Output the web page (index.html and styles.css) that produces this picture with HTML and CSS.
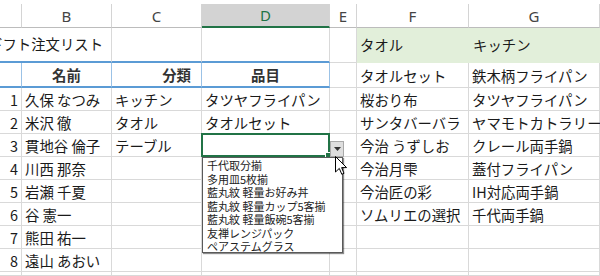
FILE: index.html
```html
<!DOCTYPE html>
<html lang="ja">

<head>
    <meta charset="utf-8">
    <title>ギフト注文リスト</title>
    <link rel="stylesheet" href="styles.css">
</head>

<body>
    <div class="sheet">
        <!--kolonne overskrifter-->
        <div class="hd"></div>
        <div class="hd">B</div>
        <div class="hd">C</div>
        <div class="hd on">D</div>
        <div class="hd">E</div>
        <div class="hd">F</div>
        <div class="hd">G</div>

        <!--titel række-->
        <div class="c ttl first"><span class="titel">ギフト注文リスト</span></div>
        <div class="c ttl"></div>
        <div class="c ttl"></div>
        <div class="c ttl"></div>
        <div class="c"></div>
        <div class="c grn f">タオル</div>
        <div class="c grn">キッチン</div>

        <!--tabel overskrift-->
        <div class="c th"></div>
        <div class="c th ctr">名前</div>
        <div class="c th rt">分類</div>
        <div class="c th ctr">品目</div>
        <div class="c"></div>
        <div class="c">タオルセット</div>
        <div class="c">鉄木柄フライパン</div>

        <div class="c num">1</div>
        <div class="c">久保 なつみ</div>
        <div class="c">キッチン</div>
        <div class="c">タツヤフライパン</div>
        <div class="c"></div>
        <div class="c">桜おり布</div>
        <div class="c">タツヤフライパン</div>

        <div class="c num">2</div>
        <div class="c">米沢 徹</div>
        <div class="c">タオル</div>
        <div class="c">タオルセット</div>
        <div class="c"></div>
        <div class="c">サンタバーバラ</div>
        <div class="c">ヤマモトカトラリー</div>

        <div class="c num">3</div>
        <div class="c">貫地谷 倫子</div>
        <div class="c">テーブル</div>
        <!--aktiv celle med dropdown liste-->
        <div class="c act">
            <div class="sel"><i class="handle"></i></div>
            <div class="btn">
                <svg width="7" height="5" viewBox="0 0 7 5"><path d="M0 0 L7 0 L3.5 4 Z" fill="#333"/></svg>
            </div>
            <ul class="list">
                <li>千代取分揃</li>
                <li>多用皿5枚揃</li>
                <li>藍丸紋 軽量お好み丼</li>
                <li>藍丸紋 軽量カップ5客揃</li>
                <li>藍丸紋 軽量飯碗5客揃</li>
                <li>友禅レンジパック</li>
                <li>ペアステムグラス</li>
            </ul>
            <svg class="cur" width="13" height="20" viewBox="0 0 13 20">
                <path d="M0.5 0.5 L0.5 16 L4.3 12.4 L6.8 18.3 L9 17.3 L6.6 11.6 L11.6 11.6 Z" fill="#fff" stroke="#000" stroke-width="1"/>
            </svg>
        </div>
        <div class="c"></div>
        <div class="c">今治 うずしお</div>
        <div class="c">クレール両手鍋</div>

        <div class="c num">4</div>
        <div class="c">川西 那奈</div>
        <div class="c"></div>
        <div class="c"></div>
        <div class="c"></div>
        <div class="c">今治月雫</div>
        <div class="c">蓋付フライパン</div>

        <div class="c num">5</div>
        <div class="c">岩瀬 千夏</div>
        <div class="c"></div>
        <div class="c"></div>
        <div class="c"></div>
        <div class="c">今治匠の彩</div>
        <div class="c">IH対応両手鍋</div>

        <div class="c num">6</div>
        <div class="c">谷 憲一</div>
        <div class="c"></div>
        <div class="c"></div>
        <div class="c"></div>
        <div class="c">ソムリエの選択</div>
        <div class="c">千代両手鍋</div>

        <div class="c num">7</div>
        <div class="c">熊田 祐一</div>
        <div class="c"></div>
        <div class="c"></div>
        <div class="c"></div>
        <div class="c"></div>
        <div class="c"></div>

        <div class="c num">8</div>
        <div class="c">遠山 あおい</div>
        <div class="c"></div>
        <div class="c"></div>
        <div class="c"></div>
        <div class="c"></div>
        <div class="c"></div>

        <div class="c"></div>
        <div class="c"></div>
        <div class="c"></div>
        <div class="c"></div>
        <div class="c"></div>
        <div class="c"></div>
        <div class="c"></div>
    </div>
</body>

</html>
```

FILE: styles.css
```css
html,
body {
    margin: 0;
    height: 100%;
    overflow: hidden;
    background: #fff;
    font-family: "Noto Sans CJK JP", sans-serif;
    color: #1a1a1a;
}

/*regnearket som grid*/

.sheet {
    margin-top: 4px;
    display: grid;
    grid-template-columns: 22px 90px 90px 128px 27px 112px 131px;
    grid-template-rows: 24px 35px 25px repeat(8, 23px) 4px;
}

.hd {
    box-sizing: border-box;
    border-right: 1px solid #d4d4d4;
    border-bottom: 1px solid #bcbcbc;
    font-family: "Noto Sans", sans-serif;
    font-size: 15px;
    color: #444;
    display: flex;
    align-items: center;
    justify-content: center;
}

.hd.on {
    background: #d3d3d3;
    color: #217346;
    border-bottom: 2px solid #217346;
}

.c {
    box-sizing: border-box;
    border-right: 1px solid #d9d9d9;
    border-bottom: 1px solid #d9d9d9;
    font-size: 14.4px;
    white-space: nowrap;
    display: flex;
    align-items: center;
    padding-left: 3px;
    min-width: 0;
}

.num {
    justify-content: flex-end;
    padding: 0 3px 0 0;
}

/*titel*/

.ttl {
    border-bottom: 2px solid #5b9bd5;
}

.ttl.first {
    border-right: none;
    padding-left: 0;
}

.titel {
    margin-left: -12px;
    padding-bottom: 2px;
}

.grn {
    background: #e2efda;
    border-color: #e2efda;
    padding-left: 4px;
    padding-bottom: 2px;
}

.grn.f {
    padding-left: 3px;
}

/*tabel overskrift*/

.th {
    font-weight: bold;
    color: #333;
    border-right: 1px solid #9bc2e6;
    border-bottom: 2px solid #5b9bd5;
}

.ctr {
    justify-content: center;
    padding-left: 0;
}

.rt {
    justify-content: flex-end;
    padding-right: 10px;
}

/*aktiv celle*/

.act {
    position: relative;
    overflow: visible;
}

.sel {
    position: absolute;
    top: -1px;
    left: -1px;
    right: -1px;
    bottom: -1px;
    border: 2px solid #217346;
    z-index: 2;
}

.handle {
    position: absolute;
    right: -4px;
    bottom: -4px;
    width: 5px;
    height: 5px;
    background: #217346;
    border: 1px solid #fff;
}

.btn {
    position: absolute;
    left: 128px;
    top: 7px;
    width: 14px;
    height: 16px;
    box-sizing: border-box;
    background: #dedede;
    border: 1px solid #a9a9a9;
    display: flex;
    align-items: center;
    justify-content: center;
    z-index: 3;
}

.list {
    position: absolute;
    left: 0;
    top: 23px;
    width: 141px;
    height: 96px;
    box-sizing: border-box;
    margin: 0;
    padding: 1px 0 0 4px;
    list-style: none;
    background: #fff;
    border: 1px solid #5a5a5a;
    box-shadow: 1px 1px 1px rgba(0, 0, 0, .45);
    font-size: 11px;
    line-height: 13.5px;
    color: #222;
    z-index: 4;
}

.cur {
    position: absolute;
    left: 133px;
    top: 22px;
    z-index: 5;
}
```
